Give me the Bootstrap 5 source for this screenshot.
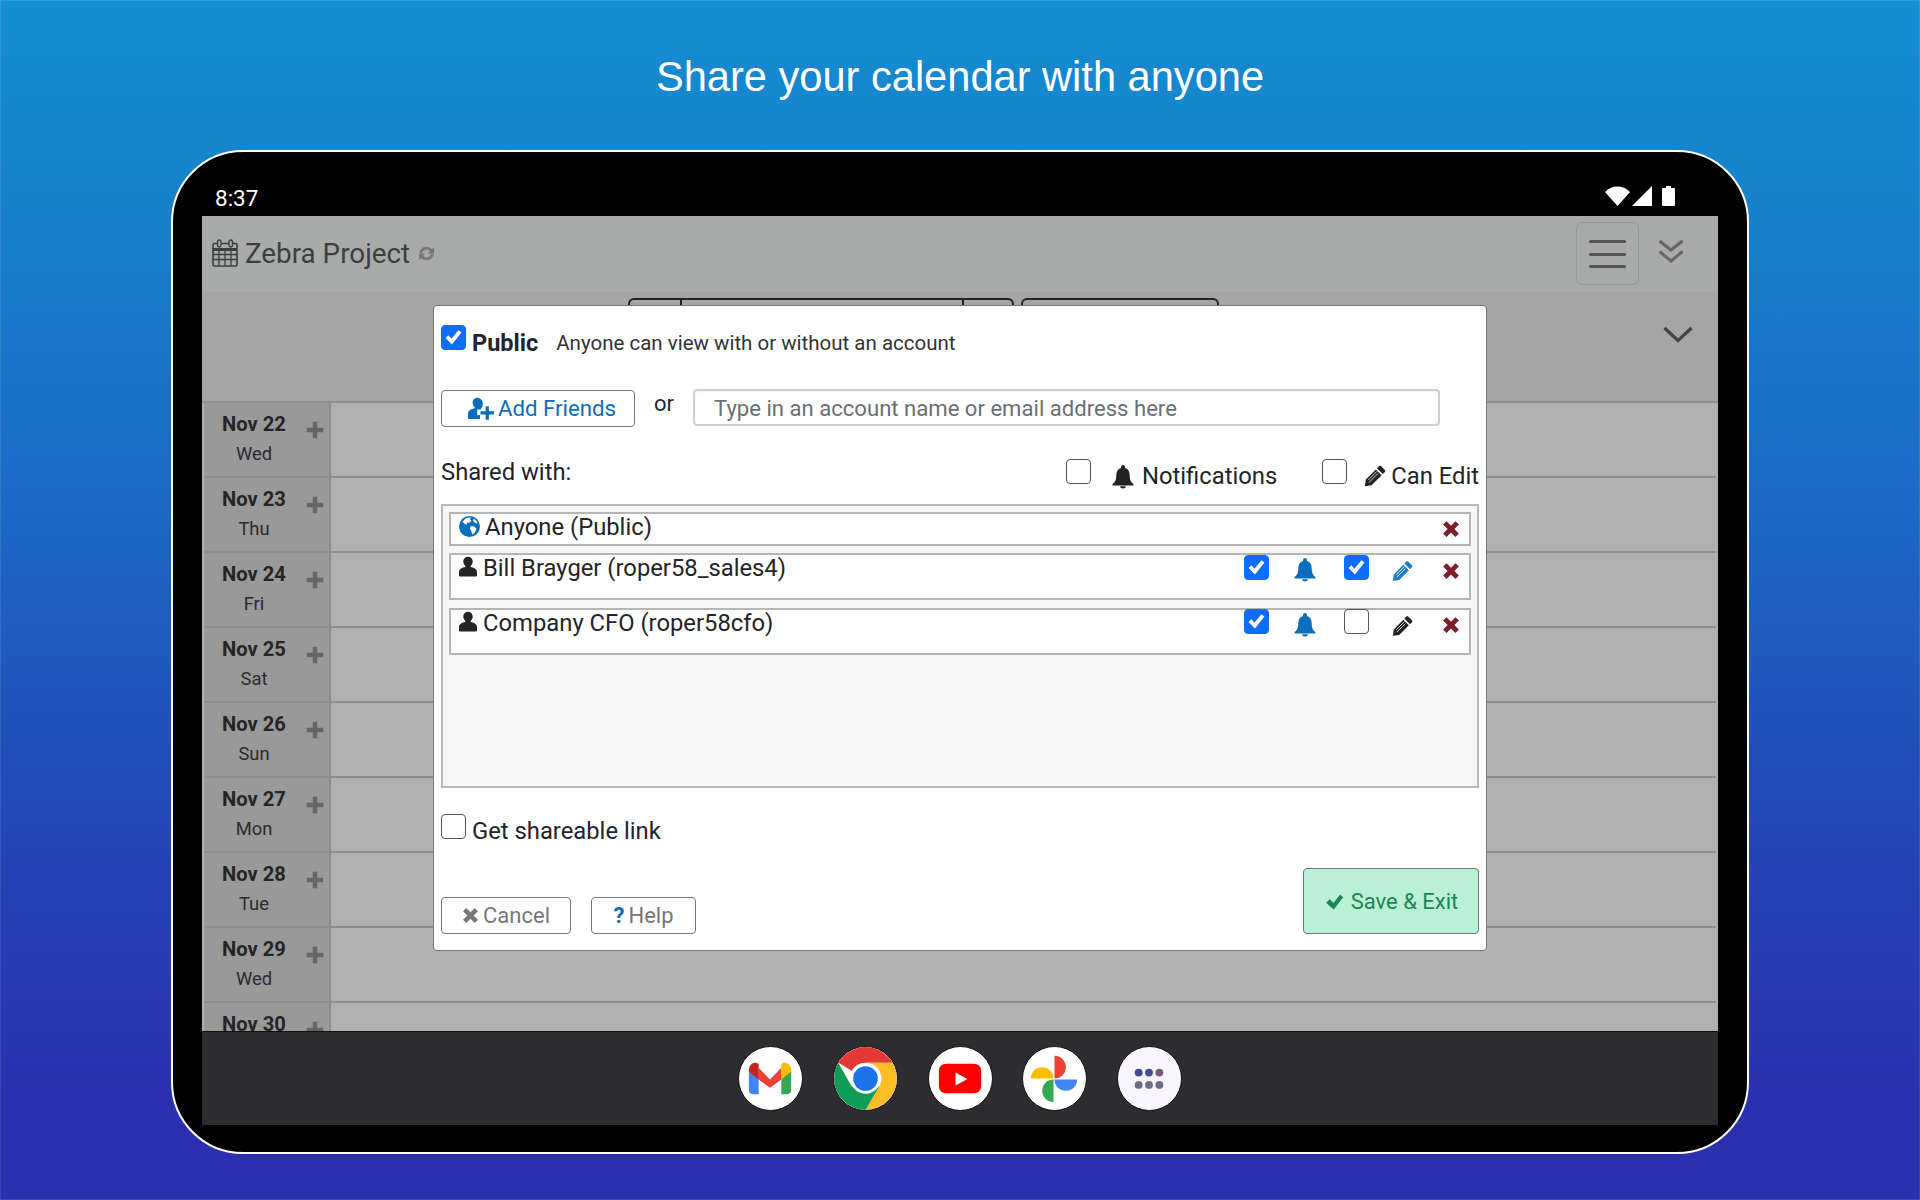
<!doctype html>
<html lang="en">
<head>
<meta charset="utf-8">
<title>Share your calendar with anyone</title>
<link rel="stylesheet" href="https://cdn.jsdelivr.net/npm/bootstrap@5.3.0/dist/css/bootstrap.min.css">
<style>
html,body{margin:0;height:1200px;overflow:hidden}
body{font-family:Roboto,"Liberation Sans",sans-serif;color:#212529;background:linear-gradient(180deg,#1590d3 0%,#1588cf 6%,#1686cd 12%,#1b6cc6 39%,#2540b4 75%,#2b30ae 92%,#2b30ae 100%);box-shadow:inset 0 0 0 1px rgba(255,255,255,.1)}
svg{display:block;flex:none}
.ico{fill:currentColor}
.promo-title{height:150px;margin:0;font:400 41.6px/153px "Liberation Sans",Arial,sans-serif;color:#fff;text-align:center}
.tablet{width:1578px;height:1004px;margin-left:171px;border:2px solid #fff;border-radius:72px;background:#000;padding:0 29px 27px;display:flex;flex-direction:column;overflow:hidden}
.status{height:64px;flex:none;color:#fff;font-size:22.5px;padding:30px 0 0 13px;position:relative}
.status-icons{position:absolute;top:34px;right:43px;gap:2px}
.screen{position:relative;flex:1;overflow:hidden;display:flex;flex-direction:column;background:#b0b0b0}
.app-bar{height:76px;flex:none;background:#a9abaa;padding:0 0 0 10px;align-items:flex-start;color:#3d3f3e}
.brand{font-size:27.8px;line-height:1;margin:24px 0 0 7px}
.toggler{width:63px;height:63px;margin-top:6px;border:1px solid #969896;border-radius:6px;padding:17px 12px 0}
.toggler span{display:block;height:3px;background:#555;margin-bottom:9.5px;border-radius:2px}
.subbar{height:111px;flex:none;background:#a5a5a5;position:relative;border-bottom:2px solid #8e8e8e}
.tab-stub{position:absolute;top:6px;height:20px;border:2px solid #222;border-bottom:0;border-radius:6px 6px 0 0}
.tab-split{position:absolute;top:0;bottom:0;width:2px;background:#222}
.day-row{height:75px;flex:none;display:flex;margin:0 2px;border-bottom:2px solid #8e8e8e}
.day-head{width:125px;flex:none;background:#999;display:flex;border-right:2px solid #8e8e8e;box-sizing:content-box}
.day-text{width:100px;text-align:center;padding-top:7px;color:#252525}
.day-text b{display:block;font-size:20.2px;line-height:28px;font-weight:700}
.day-text i{display:block;font-style:normal;font-size:18.4px;line-height:24px;margin-top:4px;color:#2b2b2b}
.day-plus{color:#666;margin:18px 0 0 2px}
.dock{position:absolute;left:0;right:0;bottom:0;height:94px;background:#2d2c30;border-top:1px solid #111;justify-content:center;gap:29.6px;padding-top:14px}
.dock-app{width:65px;height:65px;border-radius:50%;border:1px solid #111;overflow:hidden;background:#fff}
.share-dialog{position:absolute;left:231px;top:89px;width:1054px;height:646px;background:#fff;border:1px solid #777;border-radius:4px;padding:0 7px;color:#212529}
.chk.form-check-input{width:25px;height:25px;margin:0;flex:none;border:1.5px solid #555;border-radius:4px;background-size:100%}
.chk.form-check-input:checked{border-color:#0d6efd;background-color:#0d6efd;background-image:url("data:image/svg+xml,%3csvg xmlns='http://www.w3.org/2000/svg' viewBox='0 0 20 20'%3e%3cpath fill='none' stroke='%23fff' stroke-linecap='square' stroke-width='3.400' d='M5.500 10.500l3 3 6-7.500'/%3e%3c/svg%3e")}
.pub-row{height:71px;padding-top:19px}
.pub-name{font-size:23.5px;font-weight:700;margin:3px 0 0 6px;line-height:30px}
.pub-note{font-size:20.5px;margin:3px 0 0 18px;line-height:30px;color:#333}
.add-row{height:38px;margin-top:12px}
.btn.add-btn{width:194px;height:37px;flex:none;margin-top:1px;padding:0 0 0 25px;font-size:22.2px;line-height:1;border:1px solid #777;border-radius:4px;color:#0a6ebd;background:#fff;gap:3px}
.or-word{width:58px;flex:none;text-align:center;font-size:22px;line-height:30px}
.form-control.who{width:747px;height:37px;flex:none;border:2px solid #d0d0d0;border-radius:4px;padding:0 0 0 19px;font-size:22.1px;box-shadow:inset 0 1px 2px rgba(0,0,0,.06)}
.who::placeholder{color:#6b6f73;opacity:1}
.shared-row{height:45px;margin-top:32px;font-size:23.8px;line-height:30px}
.head-note{margin-top:-2px}
.panel-box{height:284px;background:#f7f7f7;border:2px solid #b9b9b9;padding:6px 6px 0;font-size:23.8px;line-height:30px;color:#252525}
.share-line{background:#fff;border:2px solid #b5b5b5;position:relative}
.line-a{height:34px;margin-bottom:7px;padding:0 0 0 8px;gap:5px}
.line-b{height:47px;margin-bottom:8px;padding:0 0 0 8px;gap:6px}
.t-chk{position:absolute}
.link-row{height:50px;margin-top:26px;font-size:23.8px}
.foot-row{height:66px;margin-top:4px;align-items:flex-end}
.btn.foot-btn{height:37px;padding:0;font-size:22px;line-height:1;border:1px solid #777;border-radius:4px;background:#fff;color:#777;gap:4px;justify-content:center}
.btn.save-btn{width:176px;height:66px;background:#b9f0d6;border:1px solid #777;border-radius:4px;color:#198754;font-size:22px;padding:0;gap:6px;justify-content:center}
.blue-ico{color:#0a6ebd}
.red-ico{color:#7f1d2d}
.abs-ico{position:absolute}
</style>
</head>
<body>
<svg width="0" height="0" style="position:absolute">
<defs>
<symbol id="i-user" viewBox="1.500 0 21 24"><path d="M12 .5c-3.300 0-5.500 2.500-5.500 5.800 0 2.100 1 3.900 2.400 5v1.400C5.500 13.400 1.500 15 1.500 18.500v4c0 .8.700 1.200 1.500 1.200h18c.8 0 1.500-.4 1.500-1.200v-4c0-3.500-4-5.100-7.400-5.800v-1.400c1.400-1.100 2.400-2.900 2.400-5C17.500 3 15.300.5 12 .5z"/></symbol>
<symbol id="i-useradd" viewBox="0 0 30 24"><path d="M11 .5C8 .5 6 2.800 6 5.800c0 2 .9 3.600 2.200 4.600v1.400C5 12.500 1 14 1 17.500V22c0 .8.600 1.300 1.400 1.300H14V19h-3v-6h4v-1.200c1.300-1 2-2.600 2-4.600C17 2.800 14 .5 11 .5z"/><path d="M20 9.500h3.500v5.500H29v3.500h-5.500V24H20v-5.500h-5.500V15H20z"/></symbol>
<symbol id="i-bell" viewBox="0 0 24 24"><path d="M12 .5a2 2 0 0 0-2 2v.9C6.800 4.400 5.300 7 5.300 10.500c0 4.500-1 6.800-3.800 9.200v1.300h21v-1.300c-2.800-2.400-3.800-4.700-3.800-9.200 0-3.500-1.500-6.100-4.700-7.100v-.9a2 2 0 0 0-2-2z"/><path d="M9.200 21.800h5.600a2.800 2.200 0 0 1-5.600 0z"/></symbol>
<symbol id="i-pencil" viewBox="0 0 24 24"><path d="M18.500 1.200l4.300 4.300c.6.600.6 1.500 0 2.100l-2.300 2.300-6.400-6.400 2.300-2.300c.6-.6 1.500-.6 2.100 0z"/><path d="M13 4.800l6.300 6.300L8.200 22.200 1 23.200l1-7.300z"/><path d="M4.800 16.300 14.300 6.800M5.500 19l9.800-9.800" stroke="#fff" stroke-width=".9" fill="none"/></symbol>
<symbol id="i-x" viewBox="0 0 24 24"><path d="M6 1.500l6 6 6-6 4.500 4.500-6 6 6 6-4.500 4.500-6-6-6 6L1.500 18l6-6-6-6z"/></symbol>
<symbol id="i-plus" viewBox="0 0 24 24"><path d="M9 1h6v8h8v6h-8v8H9v-8H1V9h8z"/></symbol>
<symbol id="i-check" viewBox="0 0 24 24"><path d="M1.500 13.500 6 9l4.800 4.800L19 3l4 3.500L11 22z"/></symbol>
<symbol id="i-refresh" viewBox="0 0 24 24"><path d="M12 2.500c3.200 0 5.800 1.300 7.600 3.400L22.500 3v9h-9l3.200-3.200C15.500 7.400 13.900 6.500 12 6.500c-3 0-5.400 2-6 5H1.800C2.600 6.200 6.800 2.500 12 2.500z"/><path d="M12 21.500c-3.200 0-5.800-1.300-7.600-3.400L1.500 21v-9h9l-3.200 3.200c1.200 1.400 2.800 2.300 4.700 2.300 3 0 5.400-2 6-5h4.200c-.8 5.300-5 9-10.200 9z"/></symbol>
<symbol id="i-globe" viewBox="0 0 24 24"><circle cx="12" cy="12" r="12"/><path d="M8 2.500c2-.8 4-1 5.500-.8l-1 2.300 1.800 1.500-2.800 2.500-2.300-.5-.5 2.500-3-1.500L4 6.300zM13.500 11.500l4 .5 2.500 2.800-2 4.200-3 2.200-.8-4-1.700-2.500zM17 2.800l3.500 3.500.5 2.500-3-1-2-3z" fill="#fff"/></symbol>
</defs>
</svg>

<h1 class="promo-title">Share your calendar with anyone</h1>

<div class="tablet">
  <div class="status">8:37
    <div class="status-icons d-flex align-items-end">
      <svg class="ico" width="25" height="20" viewBox="0 0 25 20"><path d="M12.500 20 0 6C3 2.500 7.500.5 12.500.5S22 2.500 25 6z"/></svg>
      <svg class="ico" width="20" height="20" viewBox="0 0 20 20"><path d="M20 0v20H0z"/></svg>
      <svg class="ico ms-2" width="13" height="20" viewBox="0 0 13 20"><path d="M4 0h5v2h3a1 1 0 0 1 1 1v16a1 1 0 0 1-1 1H1a1 1 0 0 1-1-1V3a1 1 0 0 1 1-1h3z"/></svg>
    </div>
  </div>

  <div class="screen">
    <div class="app-bar d-flex">
      <svg width="26" height="28" viewBox="0 0 26 28" style="margin-top:23px" fill="none" stroke="#3d3f3e"><rect x="1" y="4.500" width="24" height="22.500" rx="1.500" stroke-width="1.600" fill="#a9abaa"/><path d="M1 10.500h24" stroke-width="3"/><path d="M1 15.500h24M1 20.500h24M7 11v16M13 11v16M19 11v16" stroke-width="1.300"/><rect x="5.500" y="1" width="3.500" height="7" rx="1.700" fill="#a9abaa" stroke-width="1.400"/><rect x="17" y="1" width="3.500" height="7" rx="1.700" fill="#a9abaa" stroke-width="1.400"/></svg>
      <div class="brand">Zebra Project</div>
      <svg class="ico" width="17" height="17" style="color:#777;margin:29px 0 0 8px"><use href="#i-refresh"/></svg>
      <div class="ms-auto d-flex align-items-start">
        <div class="toggler"><span></span><span></span><span></span></div>
        <svg width="26" height="25" viewBox="0 0 26 25" fill="none" stroke="#666" stroke-width="3" style="margin:23px 34px 0 19px"><path d="M1.500 2 13 11 24.500 2M1.500 12.500 13 22 24.500 12.500"/></svg>
      </div>
    </div>
    <div class="subbar">
      <div class="tab-stub" style="left:426px;width:386px"><div class="tab-split" style="left:50px"></div><div class="tab-split" style="left:332px"></div></div>
      <div class="tab-stub" style="left:819px;width:198px"></div>
      <svg width="30" height="17" viewBox="0 0 30 17" fill="none" stroke="#444" stroke-width="3.200" style="position:absolute;left:1461px;top:34px"><path d="M1.500 2 15 14.500 28.500 2"/></svg>
    </div>

    <div class="day-row"><div class="day-head"><div class="day-text"><b>Nov 22</b><i>Wed</i></div><svg class="ico day-plus" width="18" height="18"><use href="#i-plus"/></svg></div></div>
    <div class="day-row"><div class="day-head"><div class="day-text"><b>Nov 23</b><i>Thu</i></div><svg class="ico day-plus" width="18" height="18"><use href="#i-plus"/></svg></div></div>
    <div class="day-row"><div class="day-head"><div class="day-text"><b>Nov 24</b><i>Fri</i></div><svg class="ico day-plus" width="18" height="18"><use href="#i-plus"/></svg></div></div>
    <div class="day-row"><div class="day-head"><div class="day-text"><b>Nov 25</b><i>Sat</i></div><svg class="ico day-plus" width="18" height="18"><use href="#i-plus"/></svg></div></div>
    <div class="day-row"><div class="day-head"><div class="day-text"><b>Nov 26</b><i>Sun</i></div><svg class="ico day-plus" width="18" height="18"><use href="#i-plus"/></svg></div></div>
    <div class="day-row"><div class="day-head"><div class="day-text"><b>Nov 27</b><i>Mon</i></div><svg class="ico day-plus" width="18" height="18"><use href="#i-plus"/></svg></div></div>
    <div class="day-row"><div class="day-head"><div class="day-text"><b>Nov 28</b><i>Tue</i></div><svg class="ico day-plus" width="18" height="18"><use href="#i-plus"/></svg></div></div>
    <div class="day-row"><div class="day-head"><div class="day-text"><b>Nov 29</b><i>Wed</i></div><svg class="ico day-plus" width="18" height="18"><use href="#i-plus"/></svg></div></div>
    <div class="day-row"><div class="day-head"><div class="day-text"><b>Nov 30</b><i>Thu</i></div><svg class="ico day-plus" width="18" height="18"><use href="#i-plus"/></svg></div></div>

    <div class="dock d-flex">
      <div class="dock-app"><svg width="63" height="63" viewBox="0 0 64 64">
        <path d="M10 24v20c0 2 1.500 4 4 4h6V28z" fill="#4285f4"/><path d="M53 24v20c0 2-1.500 4-4 4h-6V28z" fill="#34a853"/>
        <path d="M20 21 31.500 33 43 21V33L31.500 41.500 20 33z" fill="#ea4335"/>
        <path d="M10 24c0-7 6-10 10-6.500V33L10 25z" fill="#c5221f"/><path d="M53 24c0-7-6-10-10-6.500V33L53 25z" fill="#fbbc04"/></svg></div>
      <div class="dock-app"><svg width="63" height="63" viewBox="0 0 64 64">
        <path d="M32 0A32 32 0 0 1 59.700 16H32A16 16 0 0 0 18.100 24L4.300 16A32 32 0 0 1 32 0z" fill="#e53935"/>
        <path d="M59.700 16A32 32 0 0 1 32 64L46 40A16 16 0 0 0 32 16z" fill="#fdbd26"/>
        <path d="M4.300 16A32 32 0 0 0 32 64L46 40 18 40 4.300 16z" fill="#0f9d58"/>
        <circle cx="32" cy="32" r="15.500" fill="#fff"/><circle cx="32" cy="32" r="12.500" fill="#1a73e8"/></svg></div>
      <div class="dock-app"><svg width="63" height="63" viewBox="0 0 64 64">
        <rect x="10" y="17" width="43" height="30" rx="7" fill="#f00"/><path d="M27 26v13l12-6.500z" fill="#fff"/></svg></div>
      <div class="dock-app"><svg width="63" height="63" viewBox="0 0 64 64">
        <path d="M32 9A11.500 11.500 0 0 1 32 32z" fill="#ea4335"/><path d="M32 33H55A11.500 11.500 0 0 1 32 33z" fill="#4285f4"/>
        <path d="M31 33V56A11.500 11.500 0 0 1 31 33z" fill="#34a853"/><path d="M31 32H8A11.500 11.500 0 0 1 31 32z" fill="#fbbc04"/></svg></div>
      <div class="dock-app" style="background:#f9f6fd"><svg width="63" height="63" viewBox="0 0 64 64">
        <circle cx="21" cy="26" r="4" fill="#424b93"/><circle cx="31.500" cy="26" r="4" fill="#424b93"/><circle cx="42" cy="26" r="4" fill="#7c5580"/>
        <circle cx="21" cy="38.500" r="4" fill="#6c6d85"/><circle cx="31.500" cy="38.500" r="4" fill="#6c6d85"/><circle cx="42" cy="38.500" r="4" fill="#6c6d85"/></svg></div>
    </div>

    <div class="share-dialog">
      <div class="pub-row d-flex align-items-start">
        <input class="form-check-input chk" type="checkbox" checked aria-label="Public">
        <span class="pub-name">Public</span>
        <span class="pub-note">Anyone can view with or without an account</span>
      </div>
      <div class="add-row d-flex align-items-start">
        <button type="button" class="btn add-btn d-flex align-items-center"><svg class="ico" width="28" height="23"><use href="#i-useradd"/></svg>Add Friends</button>
        <span class="or-word">or</span>
        <input class="form-control who" type="text" placeholder="Type in an account name or email address here">
      </div>
      <div class="shared-row d-flex align-items-start">
        <span class="head-note">Shared with:</span>
        <div class="ms-auto d-flex align-items-start">
          <input class="form-check-input chk" type="checkbox" aria-label="Notifications">
          <svg class="ico" width="24" height="25" style="color:#222;margin:5px 0 0 20px"><use href="#i-bell"/></svg>
          <span style="margin:2px 0 0 7px">Notifications</span>
          <input class="form-check-input chk" type="checkbox" style="margin-left:45px" aria-label="Can Edit">
          <svg class="ico" width="22" height="22" style="color:#222;margin:6px 0 0 17px"><use href="#i-pencil"/></svg>
          <span style="margin:2px 0 0 5px">Can Edit</span>
        </div>
      </div>
      <div class="panel-box">
        <div class="share-line line-a d-flex align-items-center">
          <svg class="ico blue-ico" width="21" height="21" style="margin-top:-6px"><use href="#i-globe"/></svg><span style="margin-top:-4px">Anyone (Public)</span>
          <svg class="ico red-ico abs-ico" width="18" height="18" style="left:991px;top:6px"><use href="#i-x"/></svg>
        </div>
        <div class="share-line line-b d-flex align-items-start">
          <svg class="ico" width="18" height="21" style="margin-top:1px"><use href="#i-user"/></svg><span style="margin-top:-2px">Bill Brayger (roper58_sales4)</span>
          <input class="form-check-input chk t-chk" type="checkbox" checked style="left:793px;top:0" aria-label="Notify Bill">
          <svg class="ico blue-ico abs-ico" width="24" height="25" style="left:842px;top:2px"><use href="#i-bell"/></svg>
          <input class="form-check-input chk t-chk" type="checkbox" checked style="left:893px;top:0" aria-label="Bill can edit">
          <svg class="ico abs-ico" width="21" height="22" style="left:941px;top:5px;color:#1b7fcc"><use href="#i-pencil"/></svg>
          <svg class="ico red-ico abs-ico" width="18" height="18" style="left:991px;top:7px"><use href="#i-x"/></svg>
        </div>
        <div class="share-line line-b d-flex align-items-start">
          <svg class="ico" width="18" height="21" style="margin-top:1px"><use href="#i-user"/></svg><span style="margin-top:-2px">Company CFO (roper58cfo)</span>
          <input class="form-check-input chk t-chk" type="checkbox" checked style="left:793px;top:-1px" aria-label="Notify CFO">
          <svg class="ico blue-ico abs-ico" width="24" height="25" style="left:842px;top:2px"><use href="#i-bell"/></svg>
          <input class="form-check-input chk t-chk" type="checkbox" style="left:893px;top:-1px" aria-label="CFO can edit">
          <svg class="ico abs-ico" width="21" height="22" style="left:941px;top:5px;color:#222"><use href="#i-pencil"/></svg>
          <svg class="ico red-ico abs-ico" width="18" height="18" style="left:991px;top:6px"><use href="#i-x"/></svg>
        </div>
      </div>
      <div class="link-row d-flex align-items-start">
        <input class="form-check-input chk" type="checkbox" aria-label="Get shareable link">
        <span style="margin:2px 0 0 6px;line-height:30px">Get shareable link</span>
      </div>
      <div class="foot-row d-flex">
        <button type="button" class="btn foot-btn d-flex align-items-center" style="width:130px"><svg class="ico" width="17" height="17"><use href="#i-x"/></svg>Cancel</button>
        <button type="button" class="btn foot-btn d-flex align-items-center" style="width:105px;margin-left:20px"><b class="blue-ico" style="font-size:22px">?</b>Help</button>
        <button type="button" class="btn save-btn d-flex align-items-center ms-auto"><svg class="ico" width="21" height="19"><use href="#i-check"/></svg>Save &amp; Exit</button>
      </div>
    </div>
  </div>
</div>
</body>
</html>
